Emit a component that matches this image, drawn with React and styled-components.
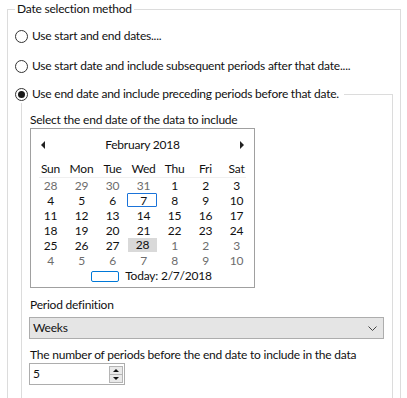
import React from "react";
import styled, { createGlobalStyle } from "styled-components";

const GlobalStyle = createGlobalStyle`
  html, body {
    margin: 0;
    padding: 0;
    background: #ffffff;
    font-family: Lato, "Segoe UI", sans-serif;
    font-size: 12px;
    line-height: 16px;
    letter-spacing: -0.22px;
    color: #111111;
  }
`;

const Page = styled.div`
  padding: 1px 7px 0 7px;
  width: 394px;
  height: 397px;
  overflow: hidden;
`;

const GroupBox = styled.fieldset`
  margin: 0;
  padding: 11px 7px 40px 7px;
  border: 1px solid #dcdcdc;
  min-inline-size: 0;
`;

const GroupTitle = styled.legend`
  padding: 0 2px;
  line-height: 16px;
`;

const RadioList = styled.div`
  display: flex;
  flex-direction: column;
  gap: 14px;
`;

const RadioRow = styled.label`
  display: flex;
  align-items: center;
  gap: 4px;
  height: 16px;
  line-height: 16px;
  white-space: nowrap;
`;

const TitleRadio = styled(RadioRow)`
  position: relative;
  z-index: 1;
  width: fit-content;
  background: #ffffff;
  padding-right: 5px;
  padding-bottom: 1px;
`;

const RadioCircle = styled.span`
  box-sizing: border-box;
  width: 13px;
  height: 13px;
  border: 1px solid #333333;
  border-radius: 50%;
  display: flex;
  align-items: center;
  justify-content: center;
  &::after {
    content: "";
    width: 7px;
    height: 7px;
    border-radius: 50%;
    background: ${(p) => (p.$checked ? "#1a1a1a" : "transparent")};
  }
`;

const InnerSection = styled.div`
  margin-top: 12px;
`;

const InnerBox = styled.div`
  margin: -9px 0 0 6px;
  padding: 17px 8px 20px 8px;
  border: 1px solid #dcdcdc;
`;

const FieldLabel = styled.div`
  line-height: 16px;
  white-space: nowrap;
  margin-top: ${(p) => p.$top || 0}px;
`;

const Calendar = styled.div`
  width: 225px;
  box-sizing: border-box;
  border: 1px solid #a0a0a0;
  padding: 8px 4px 3px 4px;
`;

const CalHeader = styled.div`
  display: flex;
  align-items: center;
  justify-content: space-between;
  height: 16px;
  padding: 0 6px;
`;

const Arrow = styled.span`
  width: 0;
  height: 0;
  border-top: 4px solid transparent;
  border-bottom: 4px solid transparent;
  ${(p) =>
    p.$dir === "left"
      ? "border-right: 4px solid #222;"
      : "border-left: 4px solid #222;"}
`;

const MonthTitle = styled.span`
  line-height: 16px;
`;

const DayNames = styled.div`
  display: grid;
  grid-template-columns: repeat(7, 31px);
  margin-top: 8px;
  height: 16px;
  line-height: 16px;
  text-align: center;
`;

const Divider = styled.div`
  height: 1px;
  background: #f0f0f0;
  margin: 0 4px;
`;

const DayGrid = styled.div`
  display: grid;
  grid-template-columns: repeat(7, 31px);
  grid-auto-rows: 15px;
`;

const Day = styled.span`
  display: flex;
  align-items: center;
  justify-content: center;
  line-height: 14px;
  color: ${(p) => (p.$muted ? "#6d6d6d" : "#111111")};
  position: relative;
  background: ${(p) => (p.$hot ? "#d9d9d9" : "transparent")};
  margin: ${(p) => (p.$hot ? "0 2px 1px 0" : "0")};
  ${(p) =>
    p.$selected &&
    `
    &::before {
      content: "";
      position: absolute;
      left: -1px;
      right: 2px;
      top: 0;
      bottom: 1px;
      border: 1px solid #1a73d9;
      border-radius: 1px;
    }
  `}
`;

const TodayRow = styled.div`
  display: flex;
  align-items: center;
  justify-content: center;
  gap: 6px;
  height: 16px;
  padding-left: 18px;
`;

const TodayBox = styled.span`
  width: 28px;
  height: 11px;
  box-sizing: border-box;
  border: 1px solid #0078d7;
  border-radius: 2px;
`;

const Combo = styled.div`
  margin-top: 4px;
  height: 22px;
  box-sizing: border-box;
  border: 1px solid #adadad;
  background: #e5e5e5;
  display: flex;
  align-items: center;
  justify-content: space-between;
  padding: 0 6px 0 3px;
  margin-left: -1px;
`;

const Spin = styled.div`
  width: 96px;
  height: 22px;
  box-sizing: border-box;
  border: 1px solid #adadad;
  display: flex;
  align-items: center;
  justify-content: space-between;
  padding: 0 1px 0 3px;
  margin-left: -1px;
`;

const SpinButtons = styled.div`
  display: flex;
  flex-direction: column;
  width: 14px;
  height: 17px;
  border: 1px solid #b5b5b5;
  box-sizing: border-box;
  background: #e9e9e9;
`;

const SpinHalf = styled.span`
  flex: 1;
  display: flex;
  align-items: center;
  justify-content: center;
  & + & {
    border-top: 1px solid #b5b5b5;
  }
  &::after {
    content: "";
    width: 0;
    height: 0;
    border-left: 3px solid transparent;
    border-right: 3px solid transparent;
    ${(p) =>
      p.$up
        ? "border-bottom: 3px solid #111;"
        : "border-top: 3px solid #111;"}
  }
`;

const weeks = [
  [[28, 1], [29, 1], [30, 1], [31, 1], [1], [2], [3]],
  [[4], [5], [6], [7, 0, "sel"], [8], [9], [10]],
  [[11], [12], [13], [14], [15], [16], [17]],
  [[18], [19], [20], [21], [22], [23], [24]],
  [[25], [26], [27], [28, 0, "hot"], [1, 1], [2, 1], [3, 1]],
  [[4, 1], [5, 1], [6, 1], [7, 1], [8, 1], [9, 1], [10, 1]],
];

const dayNames = ["Sun", "Mon", "Tue", "Wed", "Thu", "Fri", "Sat"];

export default function App() {
  return (
    <>
      <GlobalStyle />
      <Page>
        <GroupBox>
          <GroupTitle>Date selection method</GroupTitle>
          <RadioList>
            <RadioRow>
              <RadioCircle />
              Use start and end dates....
            </RadioRow>
            <RadioRow>
              <RadioCircle />
              Use start date and include subsequent periods after that date....
            </RadioRow>
          </RadioList>
          <InnerSection>
            <TitleRadio>
              <RadioCircle $checked />
              Use end date and include preceding periods before that date.
            </TitleRadio>
            <InnerBox>
              <FieldLabel>Select the end date of the data to include</FieldLabel>
              <Calendar>
                <CalHeader>
                  <Arrow $dir="left" />
                  <MonthTitle>February 2018</MonthTitle>
                  <Arrow $dir="right" />
                </CalHeader>
                <DayNames>
                  {dayNames.map((d) => (
                    <span key={d}>{d}</span>
                  ))}
                </DayNames>
                <Divider />
                <DayGrid>
                  {weeks.flat().map(([n, muted, flag], i) => (
                    <Day
                      key={i}
                      $muted={!!muted}
                      $selected={flag === "sel"}
                      $hot={flag === "hot"}
                    >
                      {n}
                    </Day>
                  ))}
                </DayGrid>
                <TodayRow>
                  <TodayBox />
                  <span>Today: 2/7/2018</span>
                </TodayRow>
              </Calendar>
              <FieldLabel $top={9}>Period definition</FieldLabel>
              <Combo>
                <span>Weeks</span>
                <svg width="9" height="5" viewBox="0 0 9 5">
                  <path d="M0.5 0.5 L4.5 4.5 L8.5 0.5" fill="none" stroke="#444" strokeWidth="1" />
                </svg>
              </Combo>
              <FieldLabel $top={8}>
                The number of periods before the end date to include in the data
              </FieldLabel>
              <Spin>
                <span>5</span>
                <SpinButtons>
                  <SpinHalf $up />
                  <SpinHalf />
                </SpinButtons>
              </Spin>
            </InnerBox>
          </InnerSection>
        </GroupBox>
      </Page>
    </>
  );
}
